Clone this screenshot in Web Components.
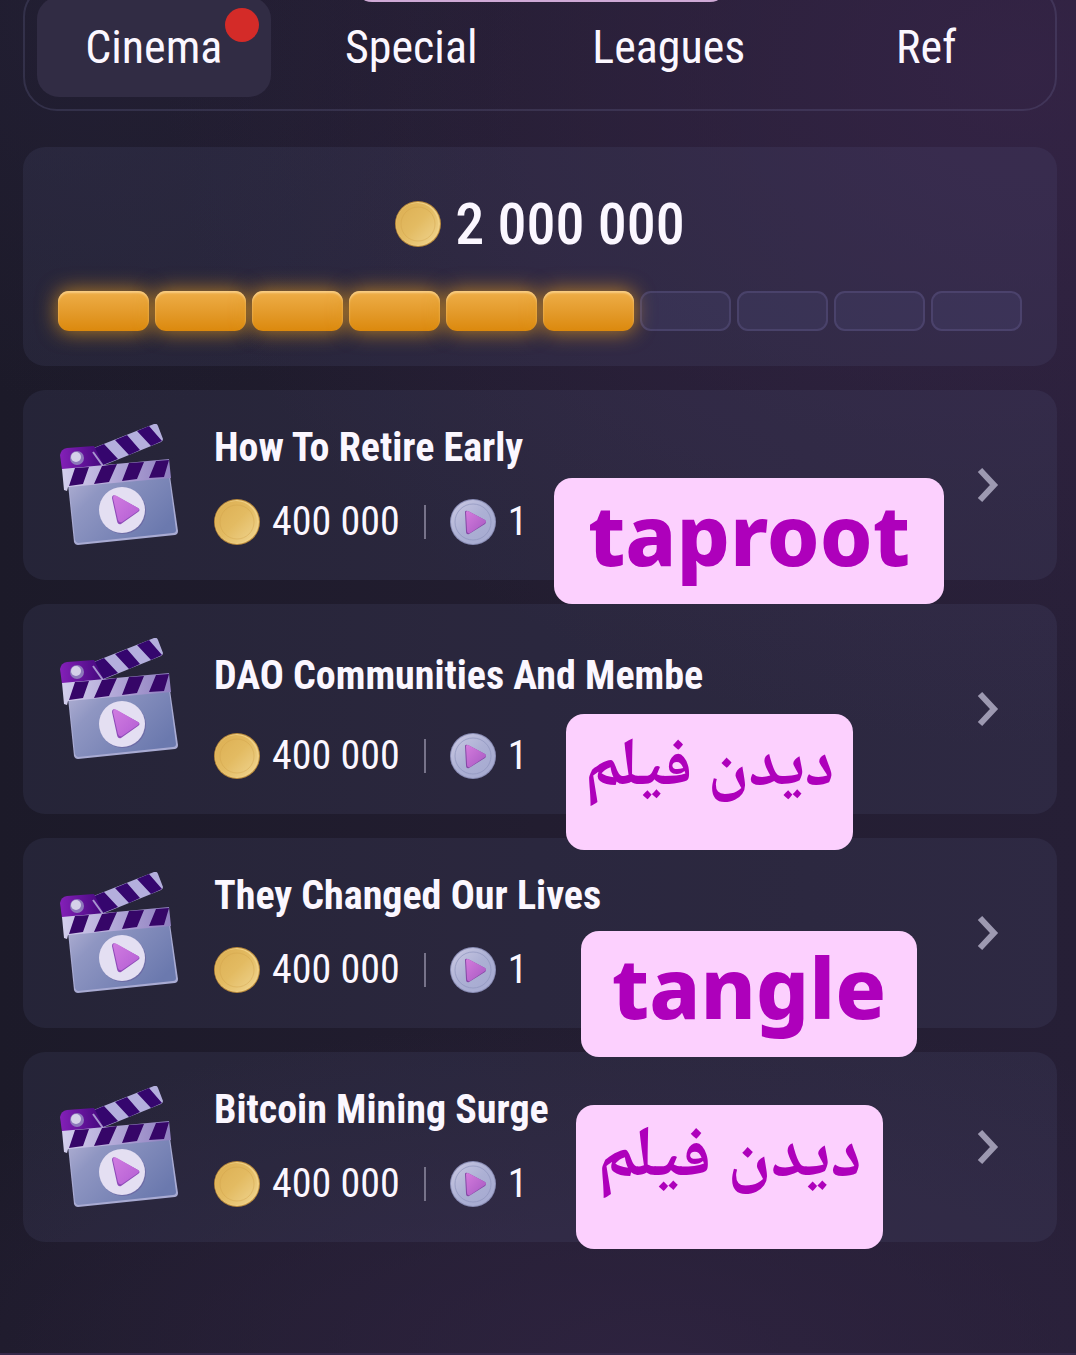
<!DOCTYPE html>
<html lang="en">
<head>
<meta charset="utf-8">
<meta name="viewport" content="width=device-width, initial-scale=1">
<title>Cinema</title>
<style>
    * { box-sizing: border-box; }
    body {
        margin: 0;
        min-height: 100vh;
        color: #fbf7ff;
        font-family: "Roboto Condensed", Roboto, sans-serif;
        background:
            radial-gradient(ellipse 80% 50% at 95% 5%, rgba(56, 37, 74, 0.75), transparent),
            radial-gradient(ellipse 40% 30% at 10% 0%, rgba(36, 32, 54, 0.8), transparent),
            radial-gradient(ellipse 80% 25% at 60% 100%, rgba(48, 36, 66, 0.8), transparent),
            linear-gradient(90deg, #1c1a29, #221d30 50%, #261f36);
    }
</style>
</head>
<body>
<cinema-page>
    <tab-bar slot="tabs">
        <tab-item active notify>Cinema</tab-item>
        <tab-item>Special</tab-item>
        <tab-item>Leagues</tab-item>
        <tab-item>Ref</tab-item>
    </tab-bar>

    <reward-progress value="6" max="10">2 000 000</reward-progress>

    <video-card reward="400 000" tickets="1">
        How To Retire Early
        <code-tag slot="tag" style="--x: 531px; --y: 88px; --w: 390px; --h: 126px">taproot</code-tag>
    </video-card>
    <video-card reward="400 000" tickets="1" tall>
        DAO Communities And Membe
        <code-tag slot="tag" lang="fa" dir="rtl" style="--x: 543px; --y: 110px; --w: 287px; --h: 136px; --size: 68px">دیدن فیلم</code-tag>
    </video-card>
    <video-card reward="400 000" tickets="1">
        They Changed Our Lives
        <code-tag slot="tag" style="--x: 558px; --y: 93px; --w: 336px; --h: 126px">tangle</code-tag>
    </video-card>
    <video-card reward="400 000" tickets="1">
        Bitcoin Mining Surge
        <code-tag slot="tag" lang="fa" dir="rtl" style="--x: 553px; --y: 53px; --w: 307px; --h: 144px; --size: 72px">دیدن فیلم</code-tag>
    </video-card>
</cinema-page>

<script>
/**
 * Base class: puts the markup from render() into an open shadow root
 */
class BaseElement extends HTMLElement {
    constructor() {
        super();
        this.attachShadow({ mode: 'open' });
    }

    connectedCallback() {
        this.shadowRoot.innerHTML = `
            <style>* { box-sizing: border-box; } :host { box-sizing: border-box; }</style>
            ${this.render()}
        `;
    }
}

// Page shell: tabs on top, then a column of cards
class CinemaPage extends BaseElement {
    render() {
        return `
            <style>
                :host {
                    display: flex;
                    flex-direction: column;
                    position: relative;
                    min-height: 100vh;
                    overflow: hidden;
                }
                /* Banner scrolled almost out of view */
                .banner {
                    position: absolute;
                    top: -38px;
                    left: 50%;
                    width: 374px;
                    height: 40px;
                    margin-left: -184px;
                    border-radius: 18px;
                    background: #cfa9d6;
                }
                header { padding: 0 19px 0 23px; margin-top: -17px; }
                main {
                    flex: 1;
                    display: flex;
                    flex-direction: column;
                    gap: 24px;
                    padding: 36px 19px 24px 23px;
                }
                footer {
                    height: 2px;
                    background: #35294a;
                }
            </style>
            <header><slot name="tabs"></slot></header>
            <main><slot></slot></main>
            <footer></footer>
            <div class="banner"></div>
        `;
    }
}

class TabBar extends BaseElement {
    render() {
        return `
            <style>
                :host { display: block; }
                nav {
                    display: grid;
                    grid-template-columns: repeat(4, 1fr);
                    padding-top: 12px;
                    padding-bottom: 12px;
                    border: 2px solid rgba(120, 120, 165, 0.22);
                    border-radius: 34px;
                }
            </style>
            <nav><slot></slot></nav>
        `;
    }
}

class TabItem extends BaseElement {
    render() {
        return `
            <style>
                :host { display: block; padding: 0 12px; }
                button {
                    position: relative;
                    display: block;
                    width: 100%;
                    height: 100px;
                    padding: 0;
                    border: 0;
                    border-radius: 22px;
                    background: none;
                    color: inherit;
                    font: 400 46px/100px "Roboto Condensed", Roboto, sans-serif;
                    text-align: center;
                }
                :host([active]) button { background: #312c44; }
                .dot {
                    position: absolute;
                    top: 11px;
                    right: 12px;
                    width: 34px;
                    height: 34px;
                    border-radius: 50%;
                    background: #d42b28;
                }
            </style>
            <button type="button">
                <slot></slot>
                ${this.hasAttribute('notify') ? '<span class="dot"></span>' : ''}
            </button>
        `;
    }
}

class CoinIcon extends BaseElement {
    render() {
        return `
            <style>
                :host { display: block; width: 46px; height: 46px; flex: none; }
                svg { display: block; }
            </style>
            <svg width="46" height="46" viewBox="0 0 46 46" aria-hidden="true">
                <defs>
                    <linearGradient id="face" x1="0" y1="0" x2="1" y2="1">
                        <stop offset="0" stop-color="#dcae52"/>
                        <stop offset=".5" stop-color="#e3bb62"/>
                        <stop offset="1" stop-color="#f0d591"/>
                    </linearGradient>
                </defs>
                <circle cx="23" cy="23" r="23" fill="#b98a3c"/>
                <circle cx="23" cy="23" r="22" fill="#f0d084"/>
                <circle cx="22" cy="23" r="21" fill="url(#face)"/>
                <circle cx="23" cy="23" r="17" fill="none" stroke="#cf9f48" stroke-opacity=".4"/>
            </svg>
        `;
    }
}

class TicketIcon extends BaseElement {
    render() {
        return `
            <style>
                :host { display: block; width: 46px; height: 46px; flex: none; }
                svg { display: block; }
            </style>
            <svg width="46" height="46" viewBox="0 0 46 46" aria-hidden="true">
                <defs>
                    <linearGradient id="face" x1="0" y1="0" x2="1" y2="1">
                        <stop offset="0" stop-color="#cccae4"/>
                        <stop offset=".5" stop-color="#acb0d4"/>
                        <stop offset="1" stop-color="#a5a9d0"/>
                    </linearGradient>
                    <linearGradient id="play" x1="0" y1="0" x2="1" y2="1">
                        <stop offset="0" stop-color="#d47bdc"/>
                        <stop offset="1" stop-color="#a659c2"/>
                    </linearGradient>
                </defs>
                <circle cx="23" cy="23" r="23" fill="#8b8eb6"/>
                <circle cx="23" cy="23" r="22" fill="url(#face)"/>
                <circle cx="23" cy="23" r="18" fill="none" stroke="#8e94bd" stroke-opacity=".7"/>
                <path d="M15 13 Q15 11 18 12 L35 21 Q37 23 35 25 L19 35 Q16 36 16 32 Z" fill="#8548a5"/>
                <path d="M16 13 Q17 11 20 13 L35 21 Q37 23 35 24 L20 34 Q17 35 17 31 Z" fill="url(#play)"/>
            </svg>
        `;
    }
}

class ClapperIcon extends BaseElement {
    render() {
        return `
            <style>
                :host { display: block; width: 120px; height: 122px; flex: none; }
                svg { display: block; }
            </style>
            <svg width="120" height="122" viewBox="0 0 120 122" aria-hidden="true">
                <defs>
                    <linearGradient id="board" x1="0" y1="0" x2="1" y2=".6">
                        <stop offset="0" stop-color="#b0afd3"/>
                        <stop offset=".3" stop-color="#8f96c2"/>
                        <stop offset="1" stop-color="#6b79ae"/>
                    </linearGradient>
                    <linearGradient id="bar" x1="0" y1="0" x2="1" y2="0">
                        <stop offset="0" stop-color="#d3cfed"/>
                        <stop offset="1" stop-color="#8f7fc0"/>
                    </linearGradient>
                    <linearGradient id="hinge" x1="0" y1="0" x2="1" y2="0">
                        <stop offset="0" stop-color="#8420b8"/>
                        <stop offset="1" stop-color="#43077c"/>
                    </linearGradient>
                    <linearGradient id="play" x1="0" y1="0" x2="1" y2="1">
                        <stop offset="0" stop-color="#d07be0"/>
                        <stop offset="1" stop-color="#b45fd4"/>
                    </linearGradient>
                </defs>
                <!-- board -->
                <path d="M10 60 L112 52 L120 107 Q120 110 117 111 L20 121 Q17 121 16 118 Z" fill="#a9abd3"/>
                <path d="M11 60 L111 52 L118 106 Q118 109 115 109 L20 119 Q18 119 17 116 Z" fill="url(#board)"/>
                <!-- upper arm -->
                <path d="M33 25 L96 0 Q99 -1 100 2 L105 15 Q105 17 103 18 L44 42 Z" fill="#b4afdd"/>
                <path d="M34 25 L46 20 L60 35 L45 41 Z M57 16 L69 11 L82 26 L71 31 Z M79 7 L91 2 L104 17 L93 22 Z" fill="#35066e"/>
                <!-- hinge -->
                <path d="M2 31 Q3 25 9 24 L36 22 L46 42 L4 46 Z" fill="url(#hinge)"/>
                <path d="M35 28 L45 42" stroke="#a795cf" stroke-width="2"/>
                <circle cx="19" cy="34" r="7" fill="#8d79bb"/>
                <circle cx="18" cy="33" r="5" fill="#d5d1e9"/>
                <!-- lower bar -->
                <path d="M4 45 L111 35 L113 54 L10 63 L9 67 L6 66 Z" fill="url(#bar)"/>
                <path d="M17 44 L31 43 L25 60 L11 62 Z M44 42 L59 40 L51 58 L36 60 Z M71 39 L86 38 L79 55 L64 57 Z M98 37 L111 36 L106 53 L91 54 Z" fill="#360668"/>
                <!-- play -->
                <circle cx="65" cy="87" r="23" fill="#6d6ca6"/>
                <circle cx="64" cy="86" r="23" fill="#e4dff2"/>
                <path d="M54 74 Q54 70 58 72 L80 84 Q83 86 80 88 L63 100 Q60 101 59 97 Z" fill="#8e4bb8"/>
                <path d="M55 74 Q55 70 59 72 L80 84 Q82 85 80 87 L64 98 Q61 99 60 96 Z" fill="url(#play)"/>
            </svg>
        `;
    }
}

/**
 * Reward total with a segmented bar
 * Attributes: value (filled segments), max (all segments)
 */
class RewardProgress extends BaseElement {
    render() {
        const value = Number(this.getAttribute('value'));
        const max = Number(this.getAttribute('max'));
        let segments = '';
        for (let i = 0; i < max; i++) {
            segments += `<span class="${i < value ? 'full' : ''}"></span>`;
        }

        return `
            <style>
                :host {
                    display: block;
                    padding: 48px 35px 35px;
                    border-radius: 22px;
                    background: rgba(110, 115, 165, 0.12);
                }
                .total {
                    display: flex;
                    align-items: center;
                    justify-content: center;
                    gap: 14px;
                    margin-bottom: 38px;
                    font-size: 58px;
                    line-height: 58px;
                    font-weight: 500;
                }
                .bar {
                    display: grid;
                    grid-template-columns: repeat(${max}, 1fr);
                    gap: 6px;
                }
                .bar span {
                    height: 40px;
                    border: 2px solid rgba(130, 125, 180, 0.22);
                    border-radius: 11px;
                    background: rgba(90, 90, 145, 0.18);
                }
                .bar .full {
                    border: 0;
                    background: linear-gradient(#efae48, #e39a2a 55%, #dc890d);
                    box-shadow: 0 0 20px 1px rgba(226, 152, 30, 0.75), inset 0 2px 2px #f8cd84;
                }
            </style>
            <div class="total"><coin-icon></coin-icon><slot></slot></div>
            <div class="bar" role="progressbar" aria-label="Reward progress" aria-valuenow="${value}" aria-valuemax="${max}">${segments}</div>
        `;
    }
}

class VideoCard extends BaseElement {
    render() {
        return `
            <style>
                :host {
                    display: flex;
                    align-items: flex-start;
                    gap: 36px;
                    position: relative;
                    padding: 34px 35px;
                    border-radius: 22px;
                    background: rgba(110, 115, 165, 0.12);
                }
                .info { flex: 1; padding-top: 2px; }
                h2 {
                    margin: 0 0 28px;
                    font-size: 40px;
                    line-height: 44px;
                    font-weight: 700;
                    white-space: nowrap;
                }
                :host([tall]) h2 { padding: 14px 0 6px; }
                .meta {
                    display: flex;
                    align-items: center;
                    gap: 12px;
                    font-size: 40px;
                    line-height: 48px;
                    white-space: nowrap;
                }
                .meta i {
                    width: 2px;
                    height: 34px;
                    margin: 0 12px;
                    background: #77738a;
                }
                button {
                    align-self: center;
                    margin: 0 22px 0 0;
                    padding: 0;
                    border: 0;
                    background: none;
                }
                button svg { display: block; }
            </style>
            <clapper-icon></clapper-icon>
            <div class="info">
                <h2><slot></slot></h2>
                <div class="meta">
                    <coin-icon></coin-icon>
                    <span>${this.getAttribute('reward')}</span>
                    <i></i>
                    <ticket-icon></ticket-icon>
                    <span>${this.getAttribute('tickets')}</span>
                </div>
            </div>
            <button type="button" aria-label="Open">
                <svg width="24" height="36" viewBox="0 0 24 36" fill="none" stroke="#9d99b1" stroke-width="6">
                    <path d="M4 3 L18 18 L4 33"/>
                </svg>
            </button>
            <slot name="tag"></slot>
        `;
    }
}

// Sticker laid over a card, placed by --x / --y / --w / --h
class CodeTag extends BaseElement {
    render() {
        return `
            <style>
                :host {
                    position: absolute;
                    z-index: 1;
                    left: var(--x);
                    top: var(--y);
                    width: var(--w);
                    height: var(--h);
                    border-radius: 18px;
                    background: #fcd0fe;
                    color: #ae00bb;
                    font: 800 84px/112px "Noto Sans", sans-serif;
                    text-align: center;
                }
                :host([lang="fa"]) {
                    font: 700 var(--size)/112px "Noto Naskh Arabic", "Noto Sans Arabic", "Noto Sans", sans-serif;
                }
            </style>
            <slot></slot>
        `;
    }
}

customElements.define('coin-icon', CoinIcon);
customElements.define('ticket-icon', TicketIcon);
customElements.define('clapper-icon', ClapperIcon);
customElements.define('tab-item', TabItem);
customElements.define('tab-bar', TabBar);
customElements.define('code-tag', CodeTag);
customElements.define('reward-progress', RewardProgress);
customElements.define('video-card', VideoCard);
customElements.define('cinema-page', CinemaPage);
</script>
</body>
</html>
